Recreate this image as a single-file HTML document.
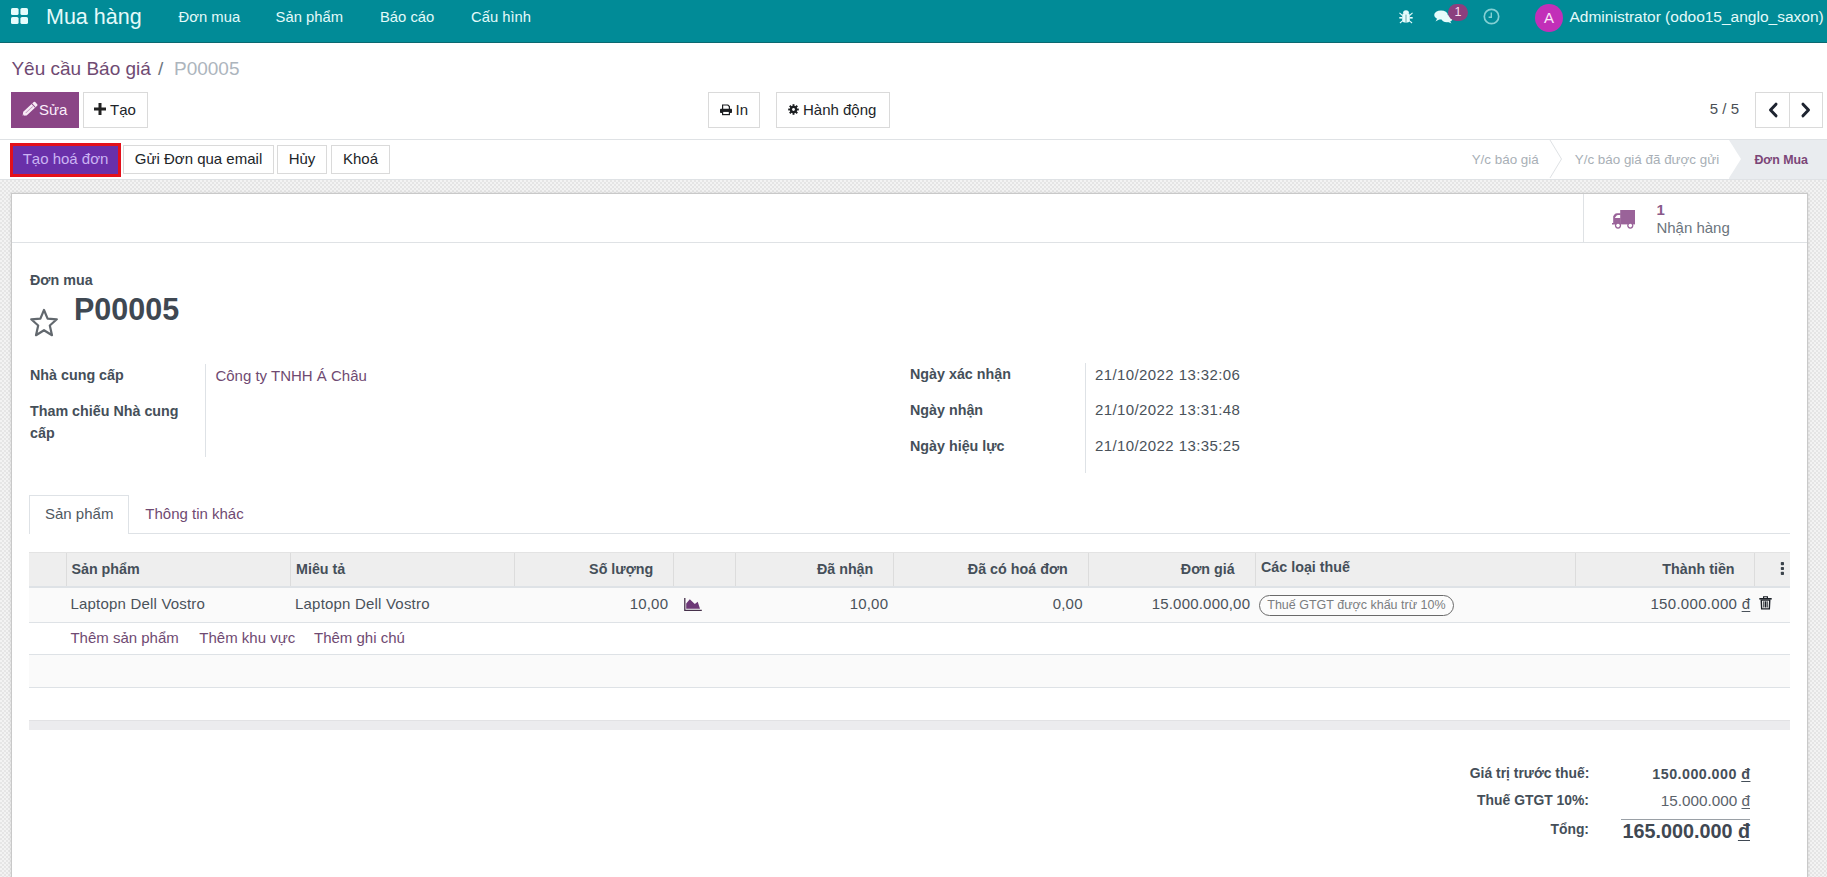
<!DOCTYPE html>
<html><head><meta charset="utf-8">
<style>
*{box-sizing:border-box;margin:0;padding:0}
html,body{width:1827px;height:877px;overflow:hidden;background:#fff;font-family:"Liberation Sans",sans-serif}
.t{position:absolute;white-space:nowrap;line-height:1}
.r{position:absolute}
u{text-decoration:underline;text-underline-offset:2px}
</style></head><body>
<div class="r" style="left:0px;top:0px;width:1827px;height:43px;background:#018b97"></div>
<div class="r" style="left:0px;top:42px;width:1827px;height:1px;background:#0b6870"></div>
<svg class="r" style="left:11px;top:8px" width="17" height="16" viewBox="0 0 17 16"><g fill="#e6fcfc"><rect x="0" y="0" width="7.6" height="7" rx="1.6"/><rect x="9.4" y="0" width="7.6" height="7" rx="1.6"/><rect x="0" y="9" width="7.6" height="7" rx="1.6"/><rect x="9.4" y="9" width="7.6" height="7" rx="1.6"/></g></svg>
<div class="t" style="top:6.80px;font-size:21.5px;font-weight:400;color:#e4fafa;left:46px;">Mua hàng</div>
<div class="t" style="top:10.17px;font-size:14.8px;font-weight:400;color:#e4fafa;left:178.6px;">Đơn mua</div>
<div class="t" style="top:10.17px;font-size:14.8px;font-weight:400;color:#e4fafa;left:275.6px;">Sản phẩm</div>
<div class="t" style="top:10.17px;font-size:14.8px;font-weight:400;color:#e4fafa;left:380px;">Báo cáo</div>
<div class="t" style="top:10.17px;font-size:14.8px;font-weight:400;color:#e4fafa;left:471px;">Cấu hình</div>
<svg class="r" style="left:1399px;top:9px" width="14" height="15" viewBox="0 0 14 15"><g fill="#e6fcfc">
<path d="M4 4.3 A3 3 0 0 1 10 4.3 Z"/><rect x="3.2" y="4" width="7.6" height="9.6" rx="2.4"/>
<rect x="0.3" y="8" width="3" height="1.6"/><rect x="10.7" y="8" width="3" height="1.6"/>
<path d="M0.8 3.4 L3.8 6 L3.1 6.9 L0.1 4.3Z"/><path d="M13.2 3.4 L10.2 6 L10.9 6.9 L13.9 4.3Z"/>
<path d="M0.6 13.6 L3.5 11.2 L4.1 12.1 L1.3 14.4Z"/><path d="M13.4 13.6 L10.5 11.2 L9.9 12.1 L12.7 14.4Z"/></g>
<rect x="6.4" y="5.6" width="1.2" height="7.6" fill="#7fb9bb"/></svg>
<svg class="r" style="left:1434px;top:10px" width="19" height="14" viewBox="0 0 19 14"><g fill="#e6fcfc">
<ellipse cx="7" cy="5" rx="6.8" ry="4.6"/><path d="M1.5 11.5 L3.5 8 L6 9Z"/>
<ellipse cx="13" cy="8.6" rx="5.6" ry="3.6" /><path d="M17.5 13.6 L15.5 10.8 L13 11.6Z"/></g></svg>
<div class="r" style="left:1448px;top:4px;width:20px;height:16.5px;background:#8b3f7e;border-radius:9px"></div>
<div class="t" style="top:5.72px;font-size:12.5px;font-weight:400;color:#f8dff0;left:958px;width:1000px;text-align:center;">1</div>
<svg class="r" style="left:1483px;top:8px" width="17" height="17" viewBox="0 0 17 17"><circle cx="8.5" cy="8.5" r="7.2" fill="none" stroke="#84d0d4" stroke-width="1.7"/><path d="M8.3 4.5 V9.2 H5.6" fill="none" stroke="#84d0d4" stroke-width="1.4"/></svg>
<div class="r" style="left:1535px;top:3.5px;width:28px;height:28px;background:#c22fb8;border-radius:50%"></div>
<div class="t" style="top:10.30px;font-size:15px;font-weight:400;color:#fbe6f8;left:1049px;width:1000px;text-align:center;">A</div>
<div class="t" style="top:9.28px;font-size:15.5px;font-weight:400;color:#e4fafa;left:1569.5px;">Administrator (odoo15_anglo_saxon)</div>
<div class="r" style="left:0px;top:139px;width:1827px;height:1px;background:#dfe2e5"></div>
<div class="t" style="top:58.72px;font-size:19px;font-weight:400;color:#6f4a72;left:11.4px;">Yêu cầu Báo giá</div>
<div class="t" style="top:58.72px;font-size:19px;font-weight:400;color:#6c757d;left:158px;">/</div>
<div class="t" style="top:58.72px;font-size:19px;font-weight:400;color:#adb5bd;left:174px;">P00005</div>
<div class="r" style="left:11px;top:92px;width:68px;height:36px;background:#8a4586"></div>
<svg class="r" style="left:21px;top:101px" width="17" height="17" viewBox="0 0 17 17"><g transform="translate(1.6,14.8) rotate(-43)"><path d="M0 0 L3.2 -2.5 H17.6 Q18.6 -2.5 18.6 -1.5 V1.5 Q18.6 2.5 17.6 2.5 H3.2Z" fill="#f7eaf6"/><rect x="14.6" y="-2.6" width="0.9" height="5.2" fill="#8a4586"/><rect x="4.2" y="-0.35" width="9.6" height="0.7" fill="#b98ab5"/><path d="M0 0 L1.3 -1 V1Z" fill="#8a4586"/></g></svg>
<div class="t" style="top:101.50px;font-size:15px;font-weight:400;color:#fbeefb;left:39px;">Sửa</div>
<div class="r" style="left:83px;top:92px;width:65px;height:36px;background:#fff;border:1px solid #dadada"></div>
<svg class="r" style="left:94px;top:103px" width="12" height="12" viewBox="0 0 12 12"><path d="M4.5 0 H7.5 V4.5 H12 V7.5 H7.5 V12 H4.5 V7.5 H0 V4.5 H4.5Z" fill="#222"/></svg>
<div class="t" style="top:101.50px;font-size:15px;font-weight:400;color:#212529;left:110px;">Tạo</div>
<div class="r" style="left:708px;top:92px;width:52px;height:36px;background:#fff;border:1px solid #dadada"></div>
<svg class="r" style="left:720px;top:103.5px" width="12" height="12" viewBox="0 0 12 12"><path d="M2.6 5.5 V1 H7.9 L9.4 2.5 V5.5" fill="#fff" stroke="#1d1f22" stroke-width="1.2"/><rect x="0" y="4.8" width="12" height="4.2" rx="0.8" fill="#1d1f22"/><rect x="2.6" y="7.3" width="6.8" height="3.3" fill="#fff" stroke="#1d1f22" stroke-width="1.2"/></svg>
<div class="t" style="top:101.50px;font-size:15px;font-weight:400;color:#212529;left:735.6px;">In</div>
<div class="r" style="left:776px;top:92px;width:114px;height:36px;background:#fff;border:1px solid #dadada"></div>
<svg class="r" style="left:788px;top:104px" width="11" height="11" viewBox="-5.5 -5.5 11 11"><g fill="#1d1f22"><circle r="3.7"/><rect x="-0.95" y="-5.3" width="1.9" height="2.6" transform="rotate(0)"/><rect x="-0.95" y="-5.3" width="1.9" height="2.6" transform="rotate(45)"/><rect x="-0.95" y="-5.3" width="1.9" height="2.6" transform="rotate(90)"/><rect x="-0.95" y="-5.3" width="1.9" height="2.6" transform="rotate(135)"/><rect x="-0.95" y="-5.3" width="1.9" height="2.6" transform="rotate(180)"/><rect x="-0.95" y="-5.3" width="1.9" height="2.6" transform="rotate(225)"/><rect x="-0.95" y="-5.3" width="1.9" height="2.6" transform="rotate(270)"/><rect x="-0.95" y="-5.3" width="1.9" height="2.6" transform="rotate(315)"/></g><circle r="1.4" fill="#fff"/></svg>
<div class="t" style="top:101.50px;font-size:15px;font-weight:400;color:#212529;left:803px;">Hành động</div>
<div class="t" style="top:101.20px;font-size:15px;font-weight:400;color:#4a4f55;left:739px;width:1000px;text-align:right;">5 / 5</div>
<div class="r" style="left:1755px;top:92px;width:68px;height:36px;background:#fff;border:1px solid #dadada"></div>
<div class="r" style="left:1789px;top:92px;width:1px;height:36px;background:#dadada"></div>
<svg class="r" style="left:1767px;top:102px" width="12" height="16" viewBox="0 0 12 16"><path d="M9 2.2 L3.5 8 L9 13.8" fill="none" stroke="#1e2430" stroke-width="3" stroke-linecap="round" stroke-linejoin="round"/></svg>
<svg class="r" style="left:1800px;top:102px" width="12" height="16" viewBox="0 0 12 16"><path d="M3 2.2 L8.5 8 L3 13.8" fill="none" stroke="#1e2430" stroke-width="3" stroke-linecap="round" stroke-linejoin="round"/></svg>
<div class="r" style="left:0px;top:179px;width:1827px;height:1px;background:#dfe2e5"></div>
<div class="r" style="left:10px;top:143px;width:111px;height:34px;background:#6930a9;border:3px solid #e3101b"></div>
<div class="t" style="top:151.30px;font-size:15px;font-weight:400;color:#cbb4f3;left:-434.5px;width:1000px;text-align:center;">Tạo hoá đơn</div>
<div class="r" style="left:123px;top:145px;width:151px;height:29px;background:#fff;border:1px solid #dadada"></div>
<div class="t" style="top:151.30px;font-size:15px;font-weight:400;color:#212529;left:-301.5px;width:1000px;text-align:center;">Gửi Đơn qua email</div>
<div class="r" style="left:277px;top:145px;width:50px;height:29px;background:#fff;border:1px solid #dadada"></div>
<div class="t" style="top:151.30px;font-size:15px;font-weight:400;color:#212529;left:-198.0px;width:1000px;text-align:center;">Hủy</div>
<div class="r" style="left:331px;top:145px;width:59px;height:29px;background:#fff;border:1px solid #dadada"></div>
<div class="t" style="top:151.30px;font-size:15px;font-weight:400;color:#212529;left:-139.5px;width:1000px;text-align:center;">Khoá</div>
<div class="r" style="left:1729px;top:140px;width:98px;height:39px;background:#e9ecef"></div>
<svg class="r" style="left:1549px;top:139px" width="200" height="40" viewBox="0 0 200 40"><path d="M1 1 L12.5 20 L1 39" fill="none" stroke="#dfe2e5" stroke-width="1"/><path d="M180 1 L192 20 L180 39 L200 39 L200 1Z" fill="#e9ecef"/><path d="M180 1 L192 20 L180 39" fill="#fff"/></svg>
<div class="t" style="top:152.56px;font-size:13.4px;font-weight:400;color:#a8afb6;left:1471.7px;">Y/c báo giá</div>
<div class="t" style="top:152.56px;font-size:13.4px;font-weight:400;color:#a8afb6;left:1574.8px;">Y/c báo giá đã được gửi</div>
<div class="t" style="top:154.10px;font-size:12.4px;font-weight:700;color:#7b4677;left:1754.4px;">Đơn Mua</div>
<div class="r" style="left:0px;top:180px;width:1827px;height:697px;background:repeating-conic-gradient(#e5e5e5 0 25%,#f3f3f3 0 50%) 0 0/4px 4px"></div>
<div class="r" style="left:11px;top:193px;width:1797px;height:700px;background:#fff;border:1px solid #c9c9c9;box-shadow:0 0 3px rgba(0,0,0,.12)"></div>
<div class="r" style="left:12px;top:242px;width:1795px;height:1px;background:#dfe2e5"></div>
<div class="r" style="left:1583px;top:194px;width:1px;height:48px;background:#dfe2e5"></div>
<svg class="r" style="left:1612px;top:209px" width="24" height="21" viewBox="0 0 24 21"><g fill="#9a6399"><path d="M8.2 1 H23 V15.4 H8.2Z"/><path d="M8.6 4.3 H5 Q3.5 4.3 2.4 5.6 L1.2 7.2 V14 H0 V15.4 H8.6Z"/><circle cx="6" cy="16.6" r="3.1"/><circle cx="18.3" cy="16.6" r="3.1"/></g><path d="M2.8 9 L4.4 6.7 Q5 5.9 6 5.9 H8.1 V9Z" fill="#fff"/><circle cx="6" cy="16.6" r="1.8" fill="#fff"/><circle cx="18.3" cy="16.6" r="1.8" fill="#fff"/></svg>
<div class="t" style="top:202.10px;font-size:15px;font-weight:700;color:#8a5a8a;left:1656.4px;">1</div>
<div class="t" style="top:219.90px;font-size:15px;font-weight:400;color:#6c757d;left:1656.4px;">Nhận hàng</div>
<div class="t" style="top:272.80px;font-size:14.3px;font-weight:700;color:#454f59;left:30px;">Đơn mua</div>
<svg class="r" style="left:29px;top:308px" width="30" height="30" viewBox="0 0 30 30"><path d="M15 2 L18.6 10.6 L27.8 11.3 L20.8 17.5 L23 27.2 L15 22.2 L7 27.2 L9.2 17.5 L2.2 11.3 L11.4 10.6Z" fill="none" stroke="#62686e" stroke-width="2.2" stroke-linejoin="round"/></svg>
<div class="t" style="top:294.18px;font-size:30.5px;font-weight:700;color:#3f4852;left:74px;">P00005</div>
<div class="t" style="top:367.60px;font-size:14.3px;font-weight:700;color:#454f59;left:30px;">Nhà cung cấp</div>
<div class="t" style="top:403.50px;font-size:14.3px;font-weight:700;color:#454f59;left:30px;">Tham chiếu Nhà cung</div>
<div class="t" style="top:426.20px;font-size:14.3px;font-weight:700;color:#454f59;left:30px;">cấp</div>
<div class="r" style="left:205px;top:364px;width:1px;height:93px;background:#dee2e6"></div>
<div class="t" style="top:368.00px;font-size:15px;font-weight:400;color:#6f4a72;left:215.4px;">Công ty TNHH Á Châu</div>
<div class="t" style="top:367.30px;font-size:14.3px;font-weight:700;color:#454f59;left:910px;">Ngày xác nhận</div>
<div class="t" style="top:366.70px;font-size:15px;font-weight:400;color:#4a525a;letter-spacing:0.4px;left:1095px;">21/10/2022 13:32:06</div>
<div class="t" style="top:403.00px;font-size:14.3px;font-weight:700;color:#454f59;left:910px;">Ngày nhận</div>
<div class="t" style="top:402.40px;font-size:15px;font-weight:400;color:#4a525a;letter-spacing:0.4px;left:1095px;">21/10/2022 13:31:48</div>
<div class="t" style="top:438.70px;font-size:14.3px;font-weight:700;color:#454f59;left:910px;">Ngày hiệu lực</div>
<div class="t" style="top:438.10px;font-size:15px;font-weight:400;color:#4a525a;letter-spacing:0.4px;left:1095px;">21/10/2022 13:35:25</div>
<div class="r" style="left:1085px;top:363px;width:1px;height:110px;background:#dee2e6"></div>
<div class="r" style="left:29px;top:533px;width:1761px;height:1px;background:#dee2e6"></div>
<div class="r" style="left:29px;top:495px;width:100px;height:39px;background:#fff;border:1px solid #dee2e6;border-bottom:none"></div>
<div class="t" style="top:506.10px;font-size:15px;font-weight:400;color:#4f5861;left:45px;">Sản phẩm</div>
<div class="t" style="top:506.10px;font-size:15px;font-weight:400;color:#6f4a72;left:145.3px;">Thông tin khác</div>
<div class="r" style="left:29px;top:552px;width:1761px;height:34px;background:#eeeeee;border-top:1px solid #e3e3e3"></div>
<div class="r" style="left:29px;top:586px;width:1761px;height:2px;background:#dee2e6"></div>
<div class="r" style="left:66px;top:553px;width:1px;height:33px;background:#dcdcdc"></div>
<div class="r" style="left:290px;top:553px;width:1px;height:33px;background:#dcdcdc"></div>
<div class="r" style="left:514px;top:553px;width:1px;height:33px;background:#dcdcdc"></div>
<div class="r" style="left:673px;top:553px;width:1px;height:33px;background:#dcdcdc"></div>
<div class="r" style="left:735px;top:553px;width:1px;height:33px;background:#dcdcdc"></div>
<div class="r" style="left:893px;top:553px;width:1px;height:33px;background:#dcdcdc"></div>
<div class="r" style="left:1088px;top:553px;width:1px;height:33px;background:#dcdcdc"></div>
<div class="r" style="left:1255px;top:553px;width:1px;height:33px;background:#dcdcdc"></div>
<div class="r" style="left:1575px;top:553px;width:1px;height:33px;background:#dcdcdc"></div>
<div class="r" style="left:1754px;top:553px;width:1px;height:33px;background:#dcdcdc"></div>
<div class="t" style="top:561.90px;font-size:14.3px;font-weight:700;color:#454f59;left:71.4px;">Sản phẩm</div>
<div class="t" style="top:561.90px;font-size:14.3px;font-weight:700;color:#454f59;left:296px;">Miêu tả</div>
<div class="t" style="top:561.90px;font-size:14.3px;font-weight:700;color:#454f59;left:-346.70000000000005px;width:1000px;text-align:right;">Số lượng</div>
<div class="t" style="top:561.90px;font-size:14.3px;font-weight:700;color:#454f59;left:-126.70000000000005px;width:1000px;text-align:right;">Đã nhận</div>
<div class="t" style="top:561.90px;font-size:14.3px;font-weight:700;color:#454f59;left:67.79999999999995px;width:1000px;text-align:right;">Đã có hoá đơn</div>
<div class="t" style="top:561.90px;font-size:14.3px;font-weight:700;color:#454f59;left:234.70000000000005px;width:1000px;text-align:right;">Đơn giá</div>
<div class="t" style="top:560.30px;font-size:14.3px;font-weight:700;color:#454f59;left:1261px;">Các loại thuế</div>
<div class="t" style="top:561.90px;font-size:14.3px;font-weight:700;color:#454f59;left:734.5999999999999px;width:1000px;text-align:right;">Thành tiền</div>
<svg class="r" style="left:1780px;top:562px" width="5" height="13" viewBox="0 0 5 13"><g fill="#3c444c"><rect x="0.8" y="0" width="3.2" height="3.2" rx="0.8"/><rect x="0.8" y="4.9" width="3.2" height="3.2" rx="0.8"/><rect x="0.8" y="9.8" width="3.2" height="3.2" rx="0.8"/></g></svg>
<div class="r" style="left:29px;top:588px;width:1761px;height:34px;background:#fafafa"></div>
<div class="r" style="left:29px;top:622px;width:1761px;height:1px;background:#dee2e6"></div>
<div class="t" style="top:596.10px;font-size:15px;font-weight:400;color:#4a525a;letter-spacing:0.2px;left:70.4px;">Laptopn Dell Vostro</div>
<div class="t" style="top:596.10px;font-size:15px;font-weight:400;color:#4a525a;letter-spacing:0.2px;left:295px;">Laptopn Dell Vostro</div>
<div class="t" style="top:596.10px;font-size:15px;font-weight:400;color:#4a525a;letter-spacing:0.2px;left:-331.8px;width:1000px;text-align:right;">10,00</div>
<svg class="r" style="left:684px;top:598px" width="19" height="14" viewBox="0 0 19 14"><path d="M0.8 0 V12.3 H17.8" fill="none" stroke="#45304a" stroke-width="1.3"/><path d="M2.2 10.8 V5.6 L5.8 1.2 L10.8 6 L13.7 3.7 L16 10.8Z" fill="#6d3877"/></svg>
<div class="t" style="top:596.10px;font-size:15px;font-weight:400;color:#4a525a;letter-spacing:0.2px;left:-111.8px;width:1000px;text-align:right;">10,00</div>
<div class="t" style="top:596.10px;font-size:15px;font-weight:400;color:#4a525a;letter-spacing:0.2px;left:82.7px;width:1000px;text-align:right;">0,00</div>
<div class="t" style="top:596.10px;font-size:15px;font-weight:400;color:#4a525a;letter-spacing:0.2px;left:250.2px;width:1000px;text-align:right;">15.000.000,00</div>
<div class="r" style="left:1259px;top:595px;width:195px;height:21px;border:1px solid #6a6a6a;border-radius:10.5px;background:#fcfcfc"></div>
<div class="t" style="top:599.22px;font-size:12.5px;font-weight:400;color:#7a7d80;left:856.4000000000001px;width:1000px;text-align:center;">Thuế GTGT được khấu trừ 10%</div>
<div class="t" style="top:596.10px;font-size:15px;font-weight:400;color:#4a525a;letter-spacing:0.3px;left:750.3px;width:1000px;text-align:right;">150.000.000 <u>đ</u></div>
<svg class="r" style="left:1759px;top:596px" width="13" height="14" viewBox="0 0 13 14"><g fill="#1c2128"><rect x="0.3" y="2" width="12.4" height="1.6"/><path d="M4 0.2 H9 V2 H7.8 V1.3 H5.2 V2 H4Z"/><path d="M1.5 3.5 H11.5 L11 13.6 H2Z M3 4.8 L3.3 12.3 H9.7 L10 4.8Z"/><rect x="4.3" y="5.3" width="1.1" height="6.2"/><rect x="6" y="5.3" width="1.1" height="6.2"/><rect x="7.6" y="5.3" width="1.1" height="6.2"/></g></svg>
<div class="r" style="left:29px;top:654px;width:1761px;height:1px;background:#dee2e6"></div>
<div class="t" style="top:630.30px;font-size:15px;font-weight:400;color:#6f4a72;left:70.4px;">Thêm sản phẩm</div>
<div class="t" style="top:630.30px;font-size:15px;font-weight:400;color:#6f4a72;left:199.3px;">Thêm khu vực</div>
<div class="t" style="top:630.30px;font-size:15px;font-weight:400;color:#6f4a72;left:314px;">Thêm ghi chú</div>
<div class="r" style="left:29px;top:655px;width:1761px;height:32px;background:#fafafa"></div>
<div class="r" style="left:29px;top:687px;width:1761px;height:1px;background:#dee2e6"></div>
<div class="r" style="left:29px;top:720px;width:1761px;height:10px;background:#ececee;border-top:1px solid #e2e2e4"></div>
<div class="t" style="top:766.83px;font-size:13.9px;font-weight:700;color:#454f59;left:589.3px;width:1000px;text-align:right;">Giá trị trước thuế:</div>
<div class="t" style="top:766.50px;font-size:14.3px;font-weight:700;color:#454f59;letter-spacing:0.45px;left:750.45px;width:1000px;text-align:right;">150.000.000 <u>đ</u></div>
<div class="t" style="top:794.03px;font-size:13.9px;font-weight:700;color:#454f59;left:589px;width:1000px;text-align:right;">Thuế GTGT 10%:</div>
<div class="t" style="top:792.85px;font-size:15.3px;font-weight:400;color:#5b636b;left:750px;width:1000px;text-align:right;">15.000.000 <u>đ</u></div>
<div class="r" style="left:1621px;top:819px;width:129px;height:1px;background:#9aa0a6"></div>
<div class="t" style="top:822.93px;font-size:13.9px;font-weight:700;color:#454f59;left:589px;width:1000px;text-align:right;">Tổng:</div>
<div class="t" style="top:821.94px;font-size:19.8px;font-weight:700;color:#3f4852;left:750px;width:1000px;text-align:right;">165.000.000 <u>đ</u></div>
</body></html>
